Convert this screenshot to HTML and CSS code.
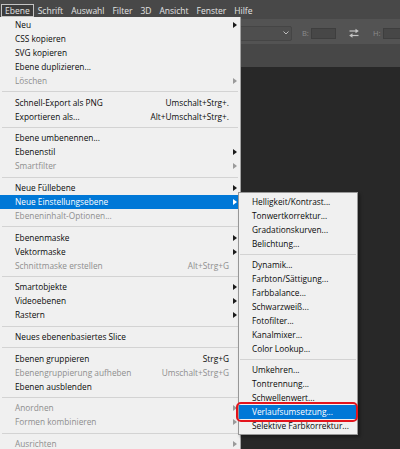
FILE: index.html
```html
<!DOCTYPE html>
<html lang="de">
<head>
<meta charset="utf-8">
<title>Ebene</title>
<link rel="stylesheet" href="styles.css">
</head>
<body>
<div class="app">
  <nav class="menubar">
    <span class="mb-item active">Ebene</span>
    <span class="mb-item">Schrift</span>
    <span class="mb-item">Auswahl</span>
    <span class="mb-item">Filter</span>
    <span class="mb-item">3D</span>
    <span class="mb-item">Ansicht</span>
    <span class="mb-item">Fenster</span>
    <span class="mb-item">Hilfe</span>
  </nav>
  <div class="optionsbar">
    <div class="dropdown">
      <svg class="chev" width="6" height="4" viewBox="0 0 6 4"><path d="M0.5 0.5 L3 3 L5.5 0.5" fill="none" stroke="#bdbdbd" stroke-width="1"/></svg>
    </div>
    <span class="opt-label">B:</span>
    <div class="field"></div>
    <svg class="swap" width="10" height="10" viewBox="0 0 10 10">
      <path d="M0.5 3 H7" stroke="#c4c4c4" stroke-width="1.2"/>
      <path d="M6.5 0.8 L9.8 3 L6.5 5.2 Z" fill="#c4c4c4"/>
      <path d="M3 7.5 H9.5" stroke="#c4c4c4" stroke-width="1.2"/>
      <path d="M3.5 5.3 L0.2 7.5 L3.5 9.7 Z" fill="#c4c4c4"/>
    </svg>
    <span class="opt-label h">H:</span>
    <div class="field wide"></div>
  </div>
  <div class="tabstrip"></div>
  <div class="canvas"></div>

  <div class="menu">
    <div class="mi sub"><span class="lbl">Neu</span></div>
    <div class="mi"><span class="lbl">CSS kopieren</span></div>
    <div class="mi"><span class="lbl">SVG kopieren</span></div>
    <div class="mi"><span class="lbl">Ebene duplizieren...</span></div>
    <div class="mi sub dis"><span class="lbl">Löschen</span></div>
    <div class="sep"></div>
    <div class="mi"><span class="lbl">Schnell-Export als PNG</span><span class="sc">Umschalt+Strg+.</span></div>
    <div class="mi"><span class="lbl">Exportieren als...</span><span class="sc">Alt+Umschalt+Strg+.</span></div>
    <div class="sep"></div>
    <div class="mi"><span class="lbl">Ebene umbenennen...</span></div>
    <div class="mi sub"><span class="lbl">Ebenenstil</span></div>
    <div class="mi sub dis"><span class="lbl">Smartfilter</span></div>
    <div class="sep"></div>
    <div class="mi sub"><span class="lbl">Neue Füllebene</span></div>
    <div class="mi sub hl"><span class="lbl">Neue Einstellungsebene</span>
      <div class="submenu">
        <div class="si">Helligkeit/Kontrast...</div>
        <div class="si">Tonwertkorrektur...</div>
        <div class="si">Gradationskurven...</div>
        <div class="si">Belichtung...</div>
        <div class="ssep"></div>
        <div class="si">Dynamik...</div>
        <div class="si">Farbton/Sättigung...</div>
        <div class="si">Farbbalance...</div>
        <div class="si">Schwarzweiß...</div>
        <div class="si">Fotofilter...</div>
        <div class="si">Kanalmixer...</div>
        <div class="si">Color Lookup...</div>
        <div class="ssep"></div>
        <div class="si">Umkehren...</div>
        <div class="si">Tontrennung...</div>
        <div class="si">Schwellenwert...</div>
        <div class="si sel">Verlaufsumsetzung...</div>
        <div class="si">Selektive Farbkorrektur...</div>
      </div>
    </div>
    <div class="mi dis"><span class="lbl">Ebeneninhalt-Optionen...</span></div>
    <div class="sep"></div>
    <div class="mi sub"><span class="lbl">Ebenenmaske</span></div>
    <div class="mi sub"><span class="lbl">Vektormaske</span></div>
    <div class="mi dis"><span class="lbl">Schnittmaske erstellen</span><span class="sc">Alt+Strg+G</span></div>
    <div class="sep"></div>
    <div class="mi sub"><span class="lbl">Smartobjekte</span></div>
    <div class="mi sub"><span class="lbl">Videoebenen</span></div>
    <div class="mi sub"><span class="lbl">Rastern</span></div>
    <div class="sep"></div>
    <div class="mi"><span class="lbl">Neues ebenenbasiertes Slice</span></div>
    <div class="sep"></div>
    <div class="mi"><span class="lbl">Ebenen gruppieren</span><span class="sc">Strg+G</span></div>
    <div class="mi dis"><span class="lbl">Ebenengruppierung aufheben</span><span class="sc">Umschalt+Strg+G</span></div>
    <div class="mi"><span class="lbl">Ebenen ausblenden</span></div>
    <div class="sep"></div>
    <div class="mi sub dis"><span class="lbl">Anordnen</span></div>
    <div class="mi sub dis"><span class="lbl">Formen kombinieren</span></div>
    <div class="sep"></div>
    <div class="mi sub dis"><span class="lbl">Ausrichten</span></div>
  </div>
</div>
</body>
</html>
```

FILE: styles.css
```css
* { box-sizing: border-box; }
html, body { margin: 0; padding: 0; }
body {
  width: 400px;
  height: 449px;
  overflow: hidden;
  background: #282828;
  font-family: "Open Sans", "Noto Sans", sans-serif;
}
.app {
  position: relative;
  width: 400px;
  height: 449px;
  display: flex;
  flex-direction: column;
  overflow: hidden;
}

/* menu bar */
.menubar {
  height: 19px;
  flex: none;
  background: #484848;
  display: flex;
  padding-left: 1px;
  color: #e4e4e4;
  font-size: 8.5px;
}
.mb-item {
  flex: none;
  margin-top: 4px;
  height: 13px;
  line-height: 13px;
  padding: 0 4px;
  white-space: nowrap;
}
.mb-item.active {
  background: #3d3d3d;
  box-shadow: inset 0 0 0 1px #c4c4c4;
}

/* options bar */
.optionsbar {
  height: 25px;
  flex: none;
  background: #535353;
  display: flex;
  align-items: center;
  padding-top: 3px;
}
.optionsbar > * { flex: none; }
.dropdown {
  margin-left: 180px;
  width: 112px;
  height: 15px;
  border: 1px solid #454545;
  background: #4e4e4e;
  border-radius: 2px;
  display: flex;
  align-items: center;
  justify-content: flex-end;
  padding-right: 2px;
}
.chev { display: block; }
.opt-label {
  margin-left: 10px;
  width: 6px;
  margin-right: 3px;
  font-size: 7.5px;
  color: #8c8c8c;
  line-height: 11px;
}
.opt-label.h { margin-left: 14px; margin-right: 4px; }
.field {
  width: 25px;
  height: 11px;
  background: #474747;
  border: 1px solid #3e3e3e;
}
.field.wide { width: 30px; }
.swap {
  display: block;
  margin-left: 13px;
}

.tabstrip {
  height: 23px;
  flex: none;
  background: #474747;
}
.canvas {
  flex: 1;
  background: #282828;
}

/* main dropdown menu */
.menu {
  position: absolute;
  top: 17px;
  left: 0;
  width: 241px;
  bottom: -20px;
  background: #f0f0f0;
  border-right: 1px solid #a3a3a3;
  padding: 1px 2px 0 0;
  font-size: 8.3px;
  color: #0a0a0a;
}
.mi {
  height: 14px;
  line-height: 14px;
  padding-left: 15px;
  display: grid;
  grid-template-columns: 1fr auto 9px;
  white-space: nowrap;
}
.mi .lbl { grid-column: 1; }
.mi .sc { grid-column: 2; }
.mi.sub::after {
  content: "";
  grid-column: 3;
  grid-row: 1;
  align-self: center;
  justify-self: start;
  margin-left: 4px;
  width: 0;
  height: 0;
  border-left: 4px solid #1a1a1a;
  border-top: 3.5px solid transparent;
  border-bottom: 3.5px solid transparent;
}
.mi.dis { color: #8e8e8e; }
.mi.sub.dis::after { border-left-color: #9a9a9a; }
.mi.hl {
  position: relative;
  background: #0078d7;
  color: #ffffff;
}
.mi.hl::after { border-left-color: #ffffff; }

.sep {
  height: 7.67px;
  margin-left: 2px;
  display: flex;
  align-items: center;
}
.sep::before {
  content: "";
  display: block;
  width: 100%;
  height: 1px;
  background: #d3d3d3;
}

/* submenu */
.submenu {
  position: absolute;
  left: 100%;
  top: -3px;
  width: 120px;
  background: #f0f0f0;
  border: 1px solid #979797;
  padding: 2px 0 1px;
  color: #0a0a0a;
  box-shadow: 2px 2px 3px rgba(0, 0, 0, 0.35);
}
.si {
  height: 14px;
  line-height: 14px;
  padding-left: 13px;
  white-space: nowrap;
}
.ssep {
  height: 7px;
  margin: 0 1px;
  display: flex;
  align-items: center;
}
.ssep::before {
  content: "";
  display: block;
  width: 100%;
  height: 1px;
  background: #d3d3d3;
}
.si.sel {
  position: relative;
  background: #0078d7;
  color: #ffffff;
}
.si.sel::after {
  content: "";
  position: absolute;
  top: -3px;
  left: -3px;
  right: -1px;
  bottom: -3px;
  border: 2.5px solid #e3141d;
  border-radius: 5px;
}
```
